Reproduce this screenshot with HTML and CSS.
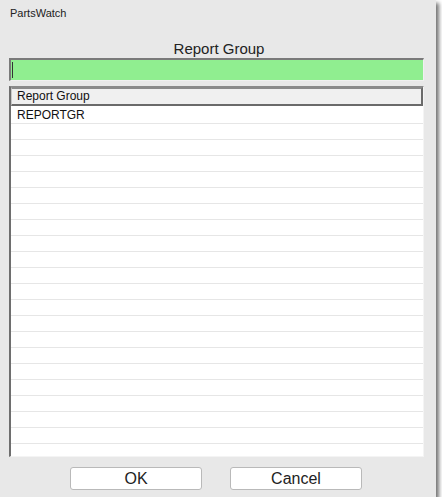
FILE: index.html
```html
<!DOCTYPE html>
<html>
<head>
<meta charset="utf-8">
<link rel="stylesheet" href="styles.css">
</head>
<body>
<div class="window">
  <div class="title">PartsWatch</div>
  <div class="label">Report Group</div>
  <div class="field"><span class="caret"></span></div>
  <div class="grid">
    <div class="grid-head">Report Group</div>
    <div class="rows">
      <div class="row">REPORTGR</div>
      <div class="row"></div><div class="row"></div><div class="row"></div><div class="row"></div>
      <div class="row"></div><div class="row"></div><div class="row"></div><div class="row"></div>
      <div class="row"></div><div class="row"></div><div class="row"></div><div class="row"></div>
      <div class="row"></div><div class="row"></div><div class="row"></div><div class="row"></div>
      <div class="row"></div><div class="row"></div><div class="row"></div><div class="row"></div>
      <div class="row"></div><div class="row"></div>
    </div>
  </div>
  <div class="buttons">
    <button class="btn">OK</button>
    <button class="btn">Cancel</button>
  </div>
</div>
</body>
</html>
```
FILE: styles.css
```css
html, body {
  margin: 0;
  padding: 0;
  background: #ffffff;
}
body {
  font-family: "Liberation Sans", Arial, sans-serif;
  color: #1a1a1a;
}
.window {
  width: 436px;
  height: 497px;
  background: #e8e8e8;
  box-shadow: 3px 3px 4px rgba(0, 0, 0, 0.55);
  display: flex;
  flex-direction: column;
  box-sizing: border-box;
}
.title {
  font-size: 11px;
  line-height: 13px;
  padding: 7px 0 0 10px;
  height: 13px;
  color: #222;
}
.label {
  margin-top: 20px;
  font-size: 15px;
  line-height: 17px;
  height: 17px;
  text-align: center;
  color: #222;
  padding-left: 2px;
}
.field {
  margin: 1px 12px 0 9px;
  height: 23px;
  box-sizing: border-box;
  background: #90ee90;
  border-top: 2px solid #7a7a7a;
  border-left: 2px solid #7a7a7a;
  border-right: 1px solid #f0f0f0;
  border-bottom: 1px solid #f0f0f0;
  display: flex;
  align-items: center;
  padding-left: 1px;
}
.caret {
  width: 1px;
  height: 16px;
  background: #333;
}
.grid {
  margin: 5px 12px 0 9px;
  height: 371px;
  box-sizing: border-box;
  background: #ffffff;
  border-top: 1px solid #8a8a8a;
  border-left: 2px solid #6e6e6e;
  border-right: 1px solid #f4f4f4;
  border-bottom: 1px solid #f4f4f4;
  display: flex;
  flex-direction: column;
  overflow: hidden;
}
.grid-head {
  height: 19px;
  flex: none;
  box-sizing: border-box;
  background: #f0f0f0;
  border: 2px solid #6a6a6a;
  border-left-width: 1px;
  border-top-color: #8a8a8a;
  border-left-color: #c8c8c8;
  font-size: 12px;
  line-height: 15px;
  padding-left: 5px;
  color: #111;
}
.rows {
  flex: 1;
  overflow: hidden;
  padding-top: 2px;
}
.row {
  height: 16px;
  box-sizing: border-box;
  border-bottom: 1px solid #e6e6e6;
  font-size: 12px;
  line-height: 15px;
  padding-left: 6px;
  color: #111;
}
.buttons {
  display: flex;
  justify-content: center;
  gap: 28px;
  padding-right: 4px;
  margin-top: 10px;
}
.btn {
  width: 132px;
  height: 23px;
  box-sizing: border-box;
  background: #ffffff;
  border: 1px solid #b9b9b9;
  border-radius: 3px;
  font-family: "Liberation Sans", Arial, sans-serif;
  font-size: 16px;
  line-height: 19px;
  color: #222;
  padding: 0;
  margin: 0;
}
```
